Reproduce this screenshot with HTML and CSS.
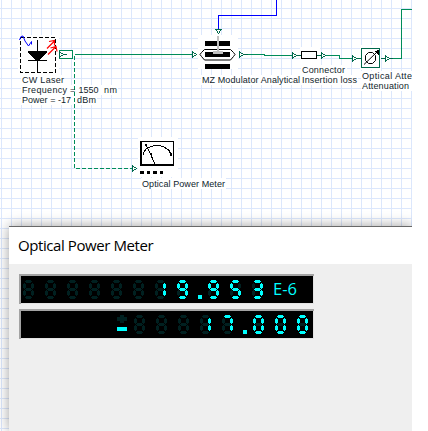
FILE: index.html
```html
<!DOCTYPE html>
<html lang="en">
<head>
<meta charset="utf-8">
<title>Optical Power Meter</title>
<link rel="stylesheet" href="styles.css">
</head>
<body>
<main class="workspace">
  <svg class="schematic" width="412" height="431" viewBox="0 0 412 431">
    <g class="clear">
      <path d="M18 35h41v40h-41zM198 35h40v34h-40zM138 137h40v40h-40zM300 47h20v18h-20zM360 45h21v25h-21z"/>
      <path d="M21 75h43v10h-43zM21 85h97v10h-97zM21 95h76v10h-76zM201 75h100v10h-100zM301 65h46v10h-46zM301 75h57v10h-57zM361 71h51v20h-51zM141 178h85v11h-85z"/>
    </g>
    <g class="wire">
      <path d="M75 54.5H193M248 54.5H264.500V55.500H292M326 55.500H339.500V58.500H352M392 58.500H401.500V9.500H412"/>
      <path class="dashed" d="M74.500 56V168.500H132"/>
      <path class="port-box" d="M59.500 50.500h13v8h-13z"/>
      <path class="blue" d="M276.500 0V15.500H218.500V29"/>
    </g>
    <g class="port">
      <path d="M60 54.500h7M192.500 52v5l4-2.500zM239.500 52v5l4-2.500zM243 54.500h5M292.500 53v5l4-2.500zM296 55.500h5M317 55.500h5M321.500 53v5l4-2.500zM352.500 56v5l4-2.500zM356 58.500h5M381 58.500h4M385.500 56v5l4-2.500zM389 58.500h4M132.500 166v5l4-2.500zM216 29.500h5l-2.500 4z"/>
      <path d="M59.500 52v5l4-2.500z"/>
    </g>
    <g class="symbol">
      <path class="selection" d="M20.500 37.500h35v34.500h-35z"/>
      <path d="M37.500 40V72M28 60.500H47"/>
      <path class="solid" d="M28 51h19v1l-7 8h-5l-7-8z"/>
      <path class="signal smooth" d="M19.500 40l1.500-3.500 2-.5 2 5 3.500 5 3-4.500v3"/>
      <path class="light smooth" d="M47 48.500L54.500 41M49 41.500l5.500-1v5M48 54.500L56 46.500M50.500 48l5.500-1.500 1 5"/>
      <path class="solid" d="M205 41h25v5h-25zM205 52h25v5h-25zM205 64h25v5h-25z"/>
      <path class="smooth" d="M204.500 49.500h26l3 3 1.500 2-1.500 2-3 3.500h-26l-3-3.500-1.500-2 1.500-2z"/>
      <path class="grey" d="M217 36h2v15h4v3h-10v-3h4z"/>
      <path class="white" d="M301.500 51.500h15v7h-15z"/>
      <path class="attenuator" d="M361.500 48.500h18v19h-18z"/>
      <path class="smooth" d="M368.500 52.500h4l3 3v5l-3 3h-4l-3-3v-5zM364 64.500L377 52"/>
      <path class="solid" d="M374 51l5-1v5z"/>
      <path class="solid" d="M140 141h34v25h-34z"/>
      <path class="white-fill" d="M142 142h31v22h-31z"/>
      <path d="M143 155l1-3 2-3 4-2 5-1.500h5l5 2 4 3 2 4M146 145l3 6 6 13"/>
      <path class="solid" d="M145 144h2v2h-2zM150 153h2v2h-2zM170 153h2v3h-2zM140 171h4v3h-4zM147 171h3v3h-3zM153 171h4v3h-4zM160 171h3v3h-3z"/>
    </g>
    <g class="labels">
      <text x="22" y="83" textLength="42">CW Laser</text>
      <text x="22" y="93" textLength="45">Frequency</text>
      <text x="70" y="93">=</text>
      <text x="78.500" y="93" textLength="20">1550</text>
      <text x="104" y="93" textLength="13">nm</text>
      <text x="22" y="103" textLength="49">Power = -17</text>
      <text x="77" y="103" textLength="19">dBm</text>
      <text x="202" y="83" textLength="98">MZ Modulator Analytical</text>
      <text x="302" y="73" textLength="43">Connector</text>
      <text x="302" y="83" textLength="55">Insertion loss</text>
      <text x="362" y="79" textLength="50">Optical Atte</text>
      <text x="362" y="89" textLength="47">Attenuation</text>
      <text x="142" y="187" textLength="83">Optical Power Meter</text>
    </g>
  </svg>
  <section class="meter">
    <h1 class="title">Optical Power Meter</h1>
    <div class="panel">
      <svg class="readout" id="watts" width="295" height="30" viewBox="0 0 295 30">
        <text class="exponent" x="254" y="21" textLength="24" lengthAdjust="spacingAndGlyphs">E-6</text>
      </svg>
      <svg class="readout" id="dbm" width="295" height="30" viewBox="0 0 295 30">
        <path class="off" d="M101 6h4v2h3v4h-3v2h-4v-2h-3v-4h3z"/>
        <path class="on" d="M98 18h10v4h-10z"/>
      </svg>
    </div>
  </section>
</main>
<script src="script.js"></script>
</body>
</html>
```
FILE: styles.css
```css
body {
  margin: 0;
  background: #fff;
  overflow: hidden;
}

.workspace {
  position: relative;
  width: 412px;
  height: 431px;
  overflow: hidden;
  background:
    linear-gradient(90deg, transparent 1px, #dce7fc 1px, #dce7fc 2px, transparent 2px) 0 0 / 10px 10px,
    linear-gradient(transparent 8px, #dce7fc 8px, #dce7fc 9px, transparent 9px) 0 0 / 10px 10px,
    #fff;
}

.schematic {
  display: block;
  fill: none;
  shape-rendering: crispEdges;
}

.clear { fill: #fff; }
.wire { stroke: #008c5a; }
.dashed { stroke-dasharray: 4 2; }
.port-box { fill: #fff; }
.blue { stroke: #00f; }
.port { stroke: #00694c; fill: #fff; }
.symbol { stroke: #000; }
.selection { stroke-dasharray: 4 2; }
.solid { fill: #000; stroke: none; }
.signal { stroke: #00f; }
.light { stroke: #f00; stroke-width: 1.2; }
.grey { fill: #c0c0c0; stroke: none; }
.white { fill: #fff; }
.white-fill { fill: #fff; stroke: none; }
.smooth { shape-rendering: auto; }
.attenuator { fill: #fff; stroke: #00694c; }

.labels {
  fill: #10252c;
  font: 9px "Liberation Sans", Arial, sans-serif;
}

.meter {
  position: absolute;
  left: 9px;
  top: 226px;
  width: 403px;
  height: 205px;
  background: #efefef;
  border-top: 1px solid #686868;
  box-sizing: border-box;
  box-shadow: 0 0 12px rgba(0, 0, 0, .38);
}

.title {
  margin: 0;
  height: 37px;
  padding-left: 9px;
  background: #fff;
  color: #000;
  font: 15px/37px "Open Sans", "Noto Sans", sans-serif;
  letter-spacing: -.42px;
}

.panel {
  display: flex;
  flex-direction: column;
  gap: 5px;
  padding: 10px;
}

.readout {
  display: block;
  box-sizing: border-box;
  background: #000;
  box-shadow: inset 2px 2px #a3a3a3, inset -1px -1px #e3e3e3;
  shape-rendering: crispEdges;
}

.on { fill: #0ff; }
.off { fill: #002020; }

.exponent {
  fill: #0ff;
  font: 17px "Open Sans", "Noto Sans", sans-serif;
}
```
FILE: script.js
```js
// Segment order: top, upper left, upper right, middle, lower left, lower right, bottom.
const SEGMENTS = [
  'M3 0h5v1h1v1h-1v1h-5v-1h-1v-1h1z',
  'M1 3h1v1h1v4h-1v1h-1v-1h-1v-4h1z',
  'M9 3h1v1h1v4h-1v1h-1v-1h-1v-4h1z',
  'M3 8h5v1h1v1h-1v1h-5v-1h-1v-1h1z',
  'M1 10h1v1h1v4h-1v1h-1v-1h-1v-4h1z',
  'M9 10h1v1h1v4h-1v1h-1v-1h-1v-4h1z',
  'M3 16h5v1h1v1h-1v1h-5v-1h-1v-1h1z'
];
const LIT = {
  ' ': '0000000', '0': '1110111', '1': '0010010', '3': '1011011',
  '5': '1101011', '7': '1010010', '9': '1111011'
};

function add(svg, d, on, x, y) {
  const path = document.createElementNS('http://www.w3.org/2000/svg', 'path');
  path.setAttribute('d', d);
  path.setAttribute('class', on ? 'on' : 'off');
  path.setAttribute('transform', `translate(${x} ${y})`);
  svg.appendChild(path);
}

function draw(id, text, start) {
  const svg = document.getElementById(id);
  let x = start;
  for (const ch of text) {
    if (ch === '.') {
      add(svg, 'M0 0h4v4h-4z', true, x - 1, 21);
      x += 9;
      continue;
    }
    // Unlit segments go first so that lit ones cover shared corners.
    for (const state of ['0', '1']) {
      SEGMENTS.forEach((d, i) => {
        if (LIT[ch][i] === state) add(svg, d, state === '1', x, 6);
      });
    }
    x += 22;
  }
}

draw('watts', '      19.953', 4);
draw('dbm', '   17.000', 115);
```
